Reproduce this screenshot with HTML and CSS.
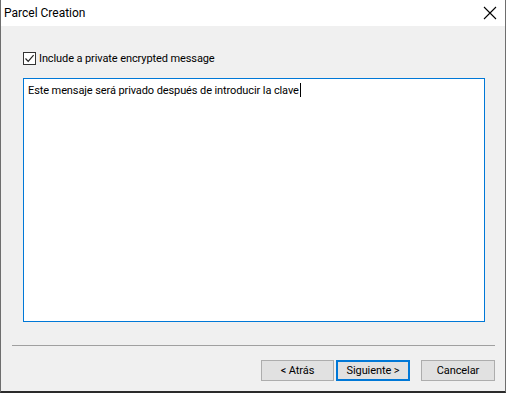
FILE: index.html
```html
<!DOCTYPE html>
<html lang="es">
<head>
    <meta charset="UTF-8">
    <title>Parcel Creation</title>
    <link rel="stylesheet" href="styles.css">
</head>
<body>
    <div class="window">
        <!-- Title bar -->
        <div class="titlebar">
            <span class="title">Parcel Creation</span>
            <span class="close-btn">
                <svg width="14" height="14" viewBox="0 0 14 14">
                    <path d="M1 1 L13 13 M13 1 L1 13" stroke="#000" stroke-width="1.1" fill="none"/>
                </svg>
            </span>
        </div>

        <div class="content">
            <label class="check-row">
                <span class="checkbox">
                    <svg width="11" height="11" viewBox="0 0 11 11">
                        <path d="M1.5 5.5 L4.2 8.3 L9.6 2.2" stroke="#222" stroke-width="1.2" fill="none"/>
                    </svg>
                </span>
                <span class="check-label">Include a private encrypted message</span>
            </label>

            <div class="message-box">Este mensaje será privado después de introducir la clave<span class="caret"></span></div>

            <div class="separator"></div>

            <div class="button-row">
                <button class="btn">&lt; Atrás</button>
                <button class="btn btn-default">Siguiente &gt;</button>
                <button class="btn btn-cancel">Cancelar</button>
            </div>
        </div>
    </div>
</body>
</html>
```

FILE: styles.css
```css
* {
    box-sizing: border-box;
    margin: 0;
    padding: 0;
}
body {
    font-family: Roboto, 'Liberation Sans', sans-serif;
    font-size: 11px;
    letter-spacing: -0.1px;
    color: #000;
    background-color: #2b2b2b;
}
.window {
    width: 506px;
    height: 393px;
    display: flex;
    flex-direction: column;
    border-left: 1px solid #6e6e6e;
    border-right: 1px solid #6e6e6e;
    border-bottom: 2px solid #2b2b2b;
    background-color: #f0f0f0;
}
.titlebar {
    height: 26px;
    background-color: #fff;
    display: flex;
    align-items: center;
    justify-content: space-between;
    padding-left: 3px;
}
.title {
    font-size: 12px;
    letter-spacing: 0;
}
.close-btn {
    width: 46px;
    height: 26px;
    display: flex;
    align-items: center;
    justify-content: center;
    margin-right: -8px;
}
.content {
    flex-grow: 1;
    padding: 0 10px 0 11px;
    display: flex;
    flex-direction: column;
}
.check-row {
    display: flex;
    align-items: center;
    margin: 26px 0 0 11px;
    height: 13px;
}
.checkbox {
    width: 13px;
    height: 13px;
    border: 1px solid #333;
    background-color: #fff;
    display: flex;
    align-items: center;
    justify-content: center;
}
.check-label {
    margin-left: 3px;
    line-height: 13px;
}
.message-box {
    margin: 13px 0 0 11px;
    width: 462px;
    height: 244px;
    background-color: #fff;
    border: 1px solid #0078d7;
    padding: 4px 4px;
    line-height: 15px;
}
.caret {
    display: inline-block;
    width: 1px;
    height: 14px;
    background-color: #000;
    vertical-align: -3px;
    margin-left: 1px;
}
.separator {
    margin-top: 23px;
    height: 1px;
    background-color: #a0a0a0;
}
.button-row {
    display: flex;
    justify-content: flex-end;
    margin-top: 14px;
}
.btn {
    width: 73px;
    height: 21px;
    font-family: inherit;
    font-size: 11px;
    letter-spacing: -0.1px;
    background-color: #e1e1e1;
    border: 1px solid #adadad;
    color: #000;
}
.btn-default {
    width: 74px;
    border: 2px solid #0078d7;
    margin-left: 2px;
}
.btn-cancel {
    width: 74px;
    margin-left: 11px;
}
```
